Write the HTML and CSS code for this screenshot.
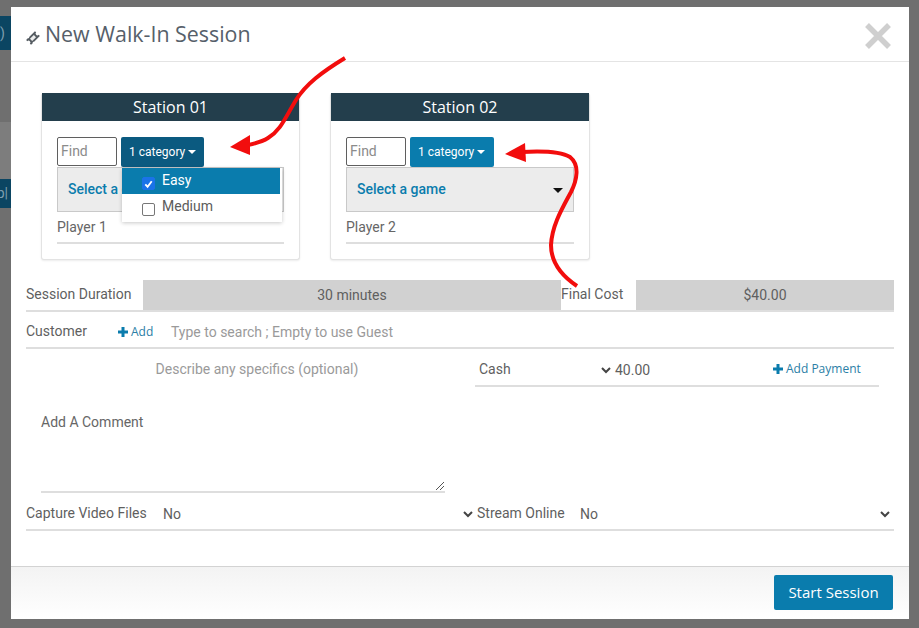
FILE: index.html
```html
<!DOCTYPE html>
<html lang="en">
<head>
<meta charset="utf-8">
<title>New Walk-In Session</title>
<link rel="stylesheet" href="styles.css">
</head>
<body>
<div class="backdrop">
  <div class="bg-chip bg-chip-a">)</div>
  <div class="bg-band"></div>
  <div class="bg-chip bg-chip-b">p|</div>
</div>
<main class="modal">
  <header class="modal-head">
    <svg class="ticket" viewBox="-2 -2 18 18" width="14" height="14"><g transform="rotate(-45 7 7)"><path d="M-1 2.500H2a1.500 1.500 0 0 0 2.500 0H15v2.200a2.300 2.300 0 0 0 0 4.600v2.200H4.500a1.500 1.500 0 0 0-2.500 0H-1v-2.200a2.300 2.300 0 0 0 0-4.600Z" fill="#555c62"/><rect x="3.500" y="5" width="7" height="4" fill="#eceded"/></g></svg>
    <h1 class="title">New Walk-In Session</h1>
    <svg class="close" viewBox="0 0 28 28" width="28" height="28"><path d="M3 3 25 25M25 3 3 25" stroke="#cfcfcf" stroke-width="5.500" fill="none"/></svg>
  </header>

  <section class="stations">
    <article class="card">
      <h2 class="card-title">Station 01</h2>
      <div class="card-body">
        <div class="filters">
          <div class="find">Find</div>
          <div class="cat-wrap">
            <div class="cat cat-open">1 category<span class="caret"></span></div>
            <div class="menu">
              <div class="menu-item menu-active"><span class="check check-on"><svg viewBox="0 0 12 12" width="12" height="12"><path d="M2.500 6.500 5 9l4.500-6" stroke="#fff" stroke-width="2" fill="none"/></svg></span>Easy</div>
              <div class="menu-item"><span class="check"></span>Medium</div>
            </div>
          </div>
        </div>
        <div class="game">Select a game<span class="game-caret"></span></div>
        <div class="player">Player 1</div>
      </div>
    </article>
    <article class="card">
      <h2 class="card-title">Station 02</h2>
      <div class="card-body">
        <div class="filters">
          <div class="find">Find</div>
          <div class="cat-wrap"><div class="cat">1 category<span class="caret"></span></div></div>
        </div>
        <div class="game">Select a game<span class="game-caret"></span></div>
        <div class="player">Player 2</div>
      </div>
    </article>
  </section>

  <section class="form">
    <div class="row row-cost">
      <div class="label label-duration">Session Duration</div>
      <div class="readout readout-duration">30 minutes</div>
      <div class="label label-final">Final Cost</div>
      <div class="readout readout-cost">$40.00</div>
    </div>
    <div class="row row-customer">
      <div class="label label-customer">Customer</div>
      <div class="add add-customer"><svg class="plus" viewBox="0 0 12 12" width="12" height="12"><path d="M6 1v10M1 6h10" stroke="#0a7cad" stroke-width="3"/></svg>Add</div>
      <div class="placeholder">Type to search ; Empty to use Guest</div>
    </div>
    <div class="split">
      <div class="notes">
        <div class="placeholder specifics">Describe any specifics (optional)</div>
        <div class="comment">Add A Comment
          <svg class="grip" viewBox="0 0 10 10" width="10" height="10"><path d="M1 9 9 1M5 9 9 5" stroke="#555" stroke-width="1" fill="none"/></svg>
        </div>
      </div>
      <div class="payment">
        <div class="pay-method">Cash<svg class="chev" viewBox="0 0 10 8" width="10" height="8"><path d="M1 2 5 6 9 2" stroke="#444" stroke-width="2" fill="none"/></svg></div>
        <div class="pay-amount">40.00</div>
        <div class="add add-pay"><svg class="plus" viewBox="0 0 12 12" width="12" height="12"><path d="M6 1v10M1 6h10" stroke="#0a7cad" stroke-width="3"/></svg>Add Payment</div>
      </div>
    </div>
    <div class="row row-options">
      <div class="label label-capture">Capture Video Files</div>
      <div class="choice choice-capture">No<svg class="chev" viewBox="0 0 10 8" width="10" height="8"><path d="M1 2 5 6 9 2" stroke="#444" stroke-width="2" fill="none"/></svg></div>
      <div class="label label-stream">Stream Online</div>
      <div class="choice choice-stream">No<svg class="chev" viewBox="0 0 10 8" width="10" height="8"><path d="M1 2 5 6 9 2" stroke="#444" stroke-width="2" fill="none"/></svg></div>
    </div>
  </section>

  <footer class="modal-foot"><div class="start">Start Session</div></footer>
</main>
<svg class="arrows" viewBox="0 0 919 628" width="919" height="628">
  <path d="M345 58C322 72 306 84 296 100C285 118 281 130 268 138C260 143 252 144 244 146" stroke="#f20d0d" stroke-width="4" fill="none"/>
  <path d="M230 147 250 135 250 155Z" fill="#f20d0d"/>
  <path d="M522 152C540 151 560 151 570 157C580 165 577 180 571 192C563 207 552 225 551 245C551 262 562 276 577 286" stroke="#f20d0d" stroke-width="4" fill="none"/>
  <path d="M505 154 525 143 526 162Z" fill="#f20d0d"/>
</svg>
</body>
</html>
```
FILE: styles.css
```css
* { box-sizing: border-box; }
html, body { margin: 0; height: 628px; overflow: hidden; }
body { background: #6f6f6f; font: 14px/20px Roboto, sans-serif; color: #5b5b5b; }

.backdrop { position: absolute; left: 0; top: 0; width: 11px; height: 628px; }
.bg-chip { position: absolute; left: 0; width: 11px; background: #0b4562; color: #7f9fb0; font-size: 14px; overflow: hidden; white-space: nowrap; display: flex; }
.bg-chip-a { top: 16px; height: 34px; line-height: 34px; }
.bg-chip-b { top: 179px; height: 29px; line-height: 29px; justify-content: flex-end; padding-right: 3px; }
.bg-band { position: absolute; left: 0; top: 122px; width: 11px; height: 57px; background: #7d7d7d; }

.modal { position: absolute; left: 11px; top: 7px; width: 898px; height: 612px; background: #fff; display: flex; flex-direction: column; }

.modal-head { height: 55px; flex: none; border-bottom: 1px solid #e4e4e4; display: flex; align-items: center; padding: 0 17px 0 15px; }
.ticket { flex: none; margin: 7px 5px 0 0; }
.title { margin: 0; flex: 1; font: 400 21.400px/30px "Open Sans", sans-serif; color: #56606a; white-space: nowrap; }
.close { flex: none; margin-top: 4px; }

.stations { flex: none; height: 218px; padding: 31px 0 0 30px; display: flex; gap: 30px; }
.card { width: 259px; height: 167px; background: #fff; border: 1px solid #e3e3e3; border-top: 0; border-radius: 3px; box-shadow: 0 1px 2px rgba(0,0,0,.08); }
.card + .card { width: 260px; }
.card-title { margin: 0; height: 28px; background: #233e4c; color: #fff; font: 400 16px/28px "Open Sans", sans-serif; text-align: center; }
.card-body { padding: 16px 15px 0; }

.filters { display: flex; gap: 4px; height: 30px; }
.find { width: 60px; height: 29px; padding-left: 3px; border: 1px solid #5f5f5f; border-radius: 2px; line-height: 26px; color: #8b8b8b; }
.cat-wrap { position: relative; }
.cat { height: 30px; width: 84px; padding-left: 8px; background: #0a7cad; color: #fff; border-radius: 2px; font-size: 12px; line-height: 30px; white-space: nowrap; }
.cat-open { width: 83px; background: #0b5a80; }
.caret { display: inline-block; margin-left: 3px; vertical-align: 2px; border: 4px solid transparent; border-top-color: #fff; border-bottom: 0; }

.menu { position: absolute; z-index: 2; left: 1px; top: 31px; width: 160px; height: 54px; padding-right: 2px; background: #fff; box-shadow: 0 1px 4px rgba(0,0,0,.22); }
.menu-item { height: 26px; padding-left: 20px; display: flex; align-items: flex-start; line-height: 24px; color: #5b5b5b; }
.menu-active { background: #0a7cad; color: #fff; }
.check { flex: none; width: 13px; height: 13px; margin: 9px 7px 0 0; border: 1px solid #777; border-radius: 2px; background: #fff; display: flex; align-items: center; justify-content: center; }
.check-on { background: #1a73e8; border-color: #1a73e8; }

.game { position: relative; height: 45px; padding-left: 10px; background: #ececec; border: 1px solid #c9c9c9; color: #0a7cad; font-weight: 500; line-height: 43px; }
.game-caret { position: absolute; right: 10px; top: 20px; border: 5px solid transparent; border-top: 5px solid #111; border-bottom: 0; border-left-width: 5.500px; border-right-width: 5.500px; }
.player { height: 32px; padding-top: 5px; border-bottom: 2px solid #dedede; line-height: 20px; color: #666; }

.form { flex: 1; padding: 0 15px; }
.row { display: flex; border-bottom: 2px solid #dedede; }
.label { flex: none; white-space: nowrap; color: #5f5f5f; }

.row-cost { height: 32px; line-height: 29px; }
.label-duration { width: 117px; }
.readout { background: #d1d1d1; text-align: center; color: #5f5f5f; line-height: 31px; height: 30px; }
.readout-duration { width: 418px; }
.label-final { width: 75px; }
.readout-cost { width: 258px; }

.row-customer { height: 37px; align-items: flex-start; padding-top: 9px; line-height: 22px; }
.label-customer { width: 91px; line-height: 20px; }
.add { display: flex; align-items: center; font: 12px/22px "Open Sans", sans-serif; color: #2b7ea6; white-space: nowrap; }
.plus { flex: none; margin-right: 2px; }
.add-customer { width: 54px; }
.placeholder { color: #9a9a9a; }

.split { display: flex; height: 144px; }
.notes { width: 449px; }
.specifics { height: 43px; padding-top: 10px; text-align: center; line-height: 20px; margin-left: 13px; }
.comment { position: relative; height: 101px; margin-left: 15px; width: 404px; padding-top: 20px; border-bottom: 2px solid #dedede; color: #666; }
.grip { position: absolute; right: 0; bottom: 0; }

.payment { width: 404px; height: 38px; display: flex; border-bottom: 2px solid #dedede; line-height: 42px; }
.pay-method { width: 140px; padding-left: 4px; display: flex; align-items: center; justify-content: space-between; padding-right: 4px; line-height: 42px; height: 42px; margin-top: -1px; color: #5f5f5f; }
.pay-method .chev { margin-top: 1px; }
.pay-amount { width: 157px; color: #5f5f5f; }
.add-pay { height: 42px; margin-top: -1px; }

.row-options { height: 38px; padding-top: 10px; line-height: 20px; align-items: flex-start; }
.label-capture { width: 137px; }
.choice { display: flex; justify-content: space-between; align-items: center; height: 20px; margin-top: 1px; color: #5f5f5f; }
.choice-capture { width: 310px; }
.label-stream { width: 103px; margin-left: 4px; }
.choice-stream { width: 310px; }

.modal-foot { flex: none; height: 53px; border-top: 1px solid #d3d3d3; background: linear-gradient(#f3f3f3, #fff); padding: 8px 16px 0 0; display: flex; justify-content: flex-end; }
.start { width: 119px; height: 35px; background: #0a7cad; color: #fff; border-radius: 2px; font: 15px/35px "Open Sans", sans-serif; text-align: center; }

.arrows { position: absolute; left: 0; top: 0; pointer-events: none; }
```
